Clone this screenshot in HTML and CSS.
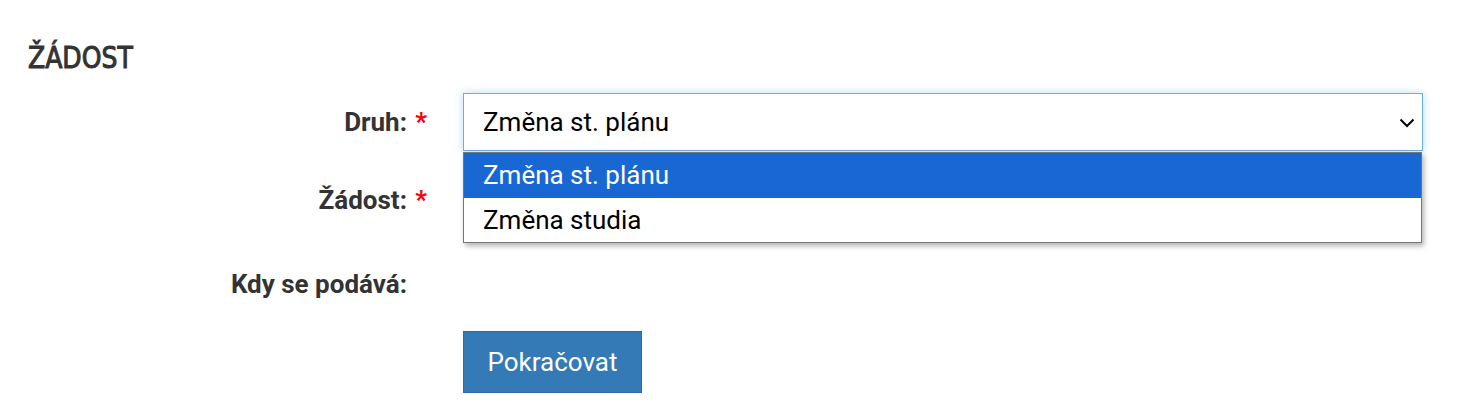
FILE: index.html
```html
<!DOCTYPE html>
<html lang="cs">
<head>
<meta charset="utf-8">
<link rel="stylesheet" href="styles.css">
</head>
<body>
<div class="page">
  <h2 class="title">ŽÁDOST</h2>
  <form class="form">
    <div class="row r1">
      <label class="label">Druh:<span class="slot"><span class="req">*</span></span></label>
      <div class="field">
        <div class="select">
          <span>Změna st. plánu</span>
          <svg class="chev" width="16" height="10" viewBox="0 0 16 10"><path d="M1.5 1.5 L8 8 L14.5 1.5" fill="none" stroke="#000" stroke-width="2"/></svg>
        </div>
        <div class="dropdown">
          <div class="opt sel">Změna st. plánu</div>
          <div class="opt">Změna studia</div>
        </div>
      </div>
    </div>
    <div class="row r2">
      <label class="label">Žádost:<span class="slot"><span class="req">*</span></span></label>
      <div class="field"></div>
    </div>
    <div class="row r3">
      <label class="label">Kdy se podává:<span class="slot"></span></label>
      <div class="field"></div>
    </div>
    <div class="row r4">
      <div class="label"></div>
      <div class="field"><button type="button" class="btn">Pokračovat</button></div>
    </div>
  </form>
</div>
</body>
</html>
```
FILE: styles.css
```css
html, body { margin: 0; padding: 0; background: #fff; }
body { font-family: Roboto, "Liberation Sans", sans-serif; color: #333; }
.page { padding: 41px 0 0 28px; }
.title {
  margin: 0;
  font-family: "DejaVu Sans Condensed", sans-serif;
  font-weight: 400;
  font-size: 30px;
  line-height: 34px;
  -webkit-text-stroke: 1px #333;
  color: #333;
  transform: scaleX(0.93);
  transform-origin: left center;
}
.form { margin-top: 18px; }
.row { display: flex; align-items: center; }
.r1 { height: 58px; }
.r2 { height: 58px; margin-top: 20px; }
.r3 { height: 30px; margin-top: 40px; }
.r4 { margin-top: 32px; }
.label {
  width: 399px;
  display: flex; justify-content: flex-end; align-items: baseline;
  font-weight: 700;
  font-size: 26px;
  color: #333;
  flex: none;
}
.slot { width: 20px; text-align: right; }
.req { color: #f00; }
.field { position: relative; margin-left: 36px; width: 960px; }
.select {
  box-sizing: border-box;
  height: 58px;
  border: 1px solid #66afe9;
  box-shadow: 0 0 8px rgba(102,175,233,.45);
  display: flex; align-items: center; justify-content: space-between;
  padding: 0 7px 0 19px;
  font-size: 26px; color: #000;
  background: #fff;
}
.chev { margin-top: 2px; }
.dropdown {
  position: absolute; left: 0; top: 59px; width: 959px;
  box-sizing: border-box;
  border: 1px solid #767676;
  background: #fff;
  box-shadow: 2px 3px 5px rgba(0,0,0,.3);
  z-index: 5;
}
.opt { height: 44px; line-height: 44px; padding-left: 19px; font-size: 26px; color: #000; }
.opt.sel { background: #1967d2; color: #fff; height: 45px; line-height: 45px; }
.btn {
  width: 179px; height: 62px;
  background: #337ab7; border: 1px solid #2e6da4;
  color: #fff; font-family: Roboto, sans-serif; font-size: 26px;
  padding: 0; cursor: pointer;
}
```
